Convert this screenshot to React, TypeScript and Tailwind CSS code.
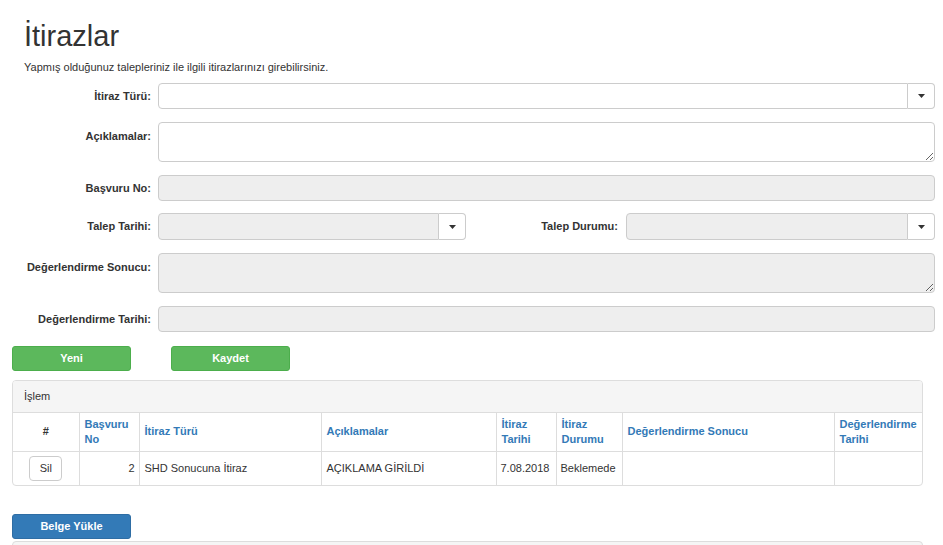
import React from "react";

const Caret = () => (
  <svg width="7" height="4" viewBox="0 0 7 4">
    <path d="M0 0h7L3.5 4z" fill="#333" />
  </svg>
);

function SelectBox({ disabled = false, className = "" }: { disabled?: boolean; className?: string }) {
  return (
    <div className={`flex h-[27px] ${className}`}>
      <input
        readOnly
        className={`flex-1 min-w-0 h-full border border-[#ccc] rounded-l-[4px] outline-none ${
          disabled ? "bg-[#eee]" : "bg-white"
        }`}
      />
      <div className="w-[27px] h-full border border-l-0 border-[#ccc] rounded-r-[4px] bg-white flex items-center justify-center">
        <Caret />
      </div>
    </div>
  );
}

const HEADERS: { label: React.ReactNode; w: string; align?: string }[] = [
  { label: "#", w: "w-[66px]", align: "text-center text-[#333]" },
  { label: <>Başvuru<br />No</>, w: "w-[60px]" },
  { label: "İtiraz Türü", w: "w-[182px]" },
  { label: "Açıklamalar", w: "w-[175px]" },
  { label: <>İtiraz<br />Tarihi</>, w: "w-[60px]" },
  { label: <>İtiraz<br />Durumu</>, w: "w-[66px]" },
  { label: "Değerlendirme Sonucu", w: "w-[212px]" },
  { label: <>Değerlendirme<br />Tarihi</>, w: "" },
];

export default function App() {
  return (
    <div
      className="w-[943px] h-[545px] overflow-hidden bg-white text-[#333] text-[11px]"
      style={{ fontFamily: '"Liberation Sans", Arial, sans-serif' }}
    >
      {/* Title */}
      <div className="pl-[24px] pt-[19px]">
        <h1 className="text-[29px] leading-[34px] font-normal">İtirazlar</h1>
        <p className="mt-[7px] leading-[14px]">
          Yapmış olduğunuz talepleriniz ile ilgili itirazlarınızı girebilirsiniz.
        </p>
      </div>

      {/* Form */}
      <div className="pl-[12px] pr-[8px] mt-[9px] font-bold">
        <div className="flex items-center h-[26px]">
          <label className="w-[146px] pr-[7px] text-right">İtiraz Türü:</label>
          <SelectBox className="flex-1 !h-[26px]" />
        </div>

        <div className="flex mt-[13px]">
          <label className="w-[146px] pr-[7px] pt-[6px] text-right">Açıklamalar:</label>
          <textarea className="flex-1 h-[40px] border border-[#ccc] rounded-[4px] bg-white outline-none resize-y" />
        </div>

        <div className="flex items-center mt-[13px]">
          <label className="w-[146px] pr-[7px] text-right">Başvuru No:</label>
          <input readOnly className="flex-1 h-[26px] border border-[#ccc] rounded-[4px] bg-[#eee] outline-none" />
        </div>

        <div className="flex items-center mt-[12px]">
          <label className="w-[146px] pr-[7px] text-right">Talep Tarihi:</label>
          <SelectBox disabled className="w-[308px]" />
          <label className="w-[160px] pr-[8px] text-right">Talep Durumu:</label>
          <SelectBox disabled className="flex-1" />
        </div>

        <div className="flex mt-[13px]">
          <label className="w-[146px] pr-[7px] pt-[6px] text-right">Değerlendirme Sonucu:</label>
          <textarea readOnly className="flex-1 h-[40px] border border-[#ccc] rounded-[4px] bg-[#eee] outline-none resize-y" />
        </div>

        <div className="flex items-center mt-[13px]">
          <label className="w-[146px] pr-[7px] text-right">Değerlendirme Tarihi:</label>
          <input readOnly className="flex-1 h-[26px] border border-[#ccc] rounded-[4px] bg-[#eee] outline-none" />
        </div>
      </div>

      {/* Buttons */}
      <div className="pl-[12px] mt-[14px] flex gap-[40px]">
        <button className="w-[119px] h-[25px] rounded-[3px] bg-[#5cb85c] border border-[#4cae4c] text-white font-bold">
          Yeni
        </button>
        <button className="w-[119px] h-[25px] rounded-[3px] bg-[#5cb85c] border border-[#4cae4c] text-white font-bold">
          Kaydet
        </button>
      </div>

      {/* Panel */}
      <div className="ml-[12px] mr-[20px] mt-[9px] border border-[#ddd] rounded-[4px] overflow-hidden">
        <div className="h-[32px] bg-[#f5f5f5] border-b border-[#ddd] px-[11px] flex items-center">İşlem</div>
        <table className="w-full border-collapse table-fixed">
          <thead>
            <tr className="h-[38px]">
              {HEADERS.map((h, i) => (
                <th
                  key={i}
                  className={`${h.w} ${h.align ?? "text-left text-[#337ab7]"} font-bold leading-[15px] px-[5px] border-[#ddd] ${
                    i > 0 ? "border-l" : ""
                  } border-b`}
                >
                  {h.label}
                </th>
              ))}
            </tr>
          </thead>
          <tbody>
            <tr className="h-[34px]">
              <td className="text-center">
                <button className="w-[33px] h-[25px] border border-[#ccc] rounded-[4px] bg-white">Sil</button>
              </td>
              <td className="border-l border-[#ddd] text-right pr-[4px]">2</td>
              <td className="border-l border-[#ddd] px-[5px]">SHD Sonucuna İtiraz</td>
              <td className="border-l border-[#ddd] px-[5px]">AÇIKLAMA GİRİLDİ</td>
              <td className="border-l border-[#ddd] px-[4px]">7.08.2018</td>
              <td className="border-l border-[#ddd] px-[4px]">Beklemede</td>
              <td className="border-l border-[#ddd]"></td>
              <td className="border-l border-[#ddd]"></td>
            </tr>
          </tbody>
        </table>
      </div>

      <div className="pl-[12px] mt-[28px]">
        <button className="w-[119px] h-[25px] rounded-[3px] bg-[#337ab7] border border-[#2e6da4] text-white font-bold">
          Belge Yükle
        </button>
      </div>
      <div className="ml-[12px] mr-[20px] mt-[2px] h-[20px] border border-[#ddd] rounded-t-[4px] bg-[#f5f5f5]" />
    </div>
  );
}
